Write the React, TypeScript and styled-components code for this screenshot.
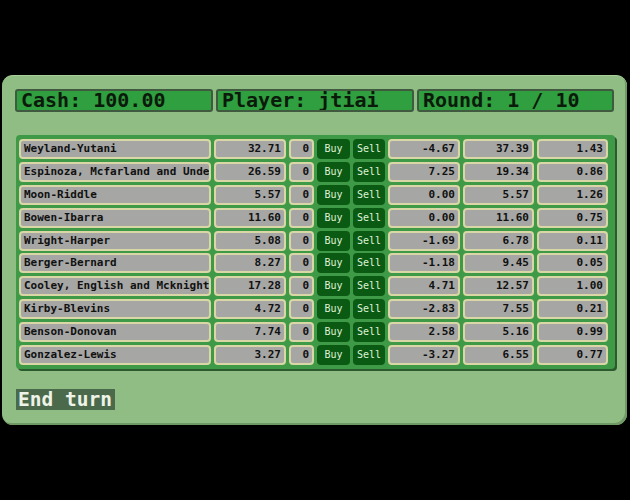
import React from "react";
import styled, { createGlobalStyle } from "styled-components";

const Global = createGlobalStyle`
  html, body { margin: 0; padding: 0; background: #000; }
  body { width: 630px; height: 500px; overflow: hidden; font-family: "DejaVu Sans Mono", monospace; }
`;

const Screen = styled.div`
  width: 630px;
  height: 500px;
  padding-top: 75px;
  padding-left: 2px;
  box-sizing: border-box;
`;

const Panel = styled.div`
  width: 625px;
  height: 350px;
  box-sizing: border-box;
  background: #8fbd83;
  border-radius: 11px;
  border-top: 1px solid #a7cf98;
  box-shadow: inset -2px -2px 0 #6f9a66;
  padding: 13px 13px 0 13px;
  display: flex;
  flex-direction: column;
`;

const Header = styled.div`
  display: grid;
  grid-template-columns: 198px 198px 197px;
  gap: 3px;
`;

const Stat = styled.div`
  height: 23px;
  box-sizing: border-box;
  background: #2f9f3f;
  border: 2px solid #3f5a3f;
  border-radius: 3px;
  font-family: "DejaVu Sans Mono", monospace;
  font-weight: bold;
  font-size: 20px;
  line-height: 19px;
  color: #0b1a0b;
  padding-left: 4px;
  white-space: nowrap;
  overflow: hidden;
`;

const Table = styled.div`
  margin-top: 23px;
  margin-left: 1px;
  width: 599px;
  box-sizing: border-box;
  background: #3f9a48;
  border-radius: 4px;
  padding: 4px 3px 4px 3px;
  box-shadow: 2px 2px 0 #2b5a2e;
  display: grid;
  grid-template-columns: 192px 72px 25px 33px 32px 72px 71px 71px;
  grid-auto-rows: 20px;
  column-gap: 3px;
  row-gap: 2.9px;
`;

const Cell = styled.div<{ $right?: boolean }>`
  box-sizing: border-box;
  background: #a6a6a4;
  border: 2px solid #d9d7a5;
  border-radius: 4px;
  font-family: "DejaVu Sans Mono", monospace;
  font-weight: bold;
  font-size: 11px;
  line-height: 16px;
  color: #111;
  padding: 0 3px;
  text-align: ${(p) => (p.$right ? "right" : "left")};
  white-space: nowrap;
  overflow: hidden;
`;

const TradeButton = styled.div`
  background: #0b5a14;
  border-radius: 4px;
  color: #dff2d6;
  font-family: "DejaVu Sans Mono", monospace;
  font-size: 10px;
  line-height: 20px;
  text-align: center;
`;

const EndTurn = styled.div`
  margin-top: 20px;
  margin-left: 1px;
  width: 99px;
  height: 21px;
  background: #4b6a4b;
  color: #eef3e8;
  font-family: "DejaVu Sans Mono", monospace;
  font-weight: bold;
  font-size: 19.5px;
  line-height: 21px;
  padding-left: 2px;
  box-sizing: border-box;
  white-space: nowrap;
`;

type Row = [string, string, string, string, string];

const rows: Row[] = [
  ["Weyland-Yutani", "32.71", "-4.67", "37.39", "1.43"],
  ["Espinoza, Mcfarland and Unde", "26.59", "7.25", "19.34", "0.86"],
  ["Moon-Riddle", "5.57", "0.00", "5.57", "1.26"],
  ["Bowen-Ibarra", "11.60", "0.00", "11.60", "0.75"],
  ["Wright-Harper", "5.08", "-1.69", "6.78", "0.11"],
  ["Berger-Bernard", "8.27", "-1.18", "9.45", "0.05"],
  ["Cooley, English and Mcknight", "17.28", "4.71", "12.57", "1.00"],
  ["Kirby-Blevins", "4.72", "-2.83", "7.55", "0.21"],
  ["Benson-Donovan", "7.74", "2.58", "5.16", "0.99"],
  ["Gonzalez-Lewis", "3.27", "-3.27", "6.55", "0.77"],
];

export default function App() {
  return (
    <>
      <Global />
      <Screen>
        <Panel>
          <Header>
            <Stat>Cash: 100.00</Stat>
            <Stat>Player: jtiai</Stat>
            <Stat>Round: 1 / 10</Stat>
          </Header>
          <Table>
            {rows.map((r) => (
              <React.Fragment key={r[0]}>
                <Cell>{r[0]}</Cell>
                <Cell $right>{r[1]}</Cell>
                <Cell $right>0</Cell>
                <TradeButton>Buy</TradeButton>
                <TradeButton>Sell</TradeButton>
                <Cell $right>{r[2]}</Cell>
                <Cell $right>{r[3]}</Cell>
                <Cell $right>{r[4]}</Cell>
              </React.Fragment>
            ))}
          </Table>
          <EndTurn>End turn</EndTurn>
        </Panel>
      </Screen>
    </>
  );
}
